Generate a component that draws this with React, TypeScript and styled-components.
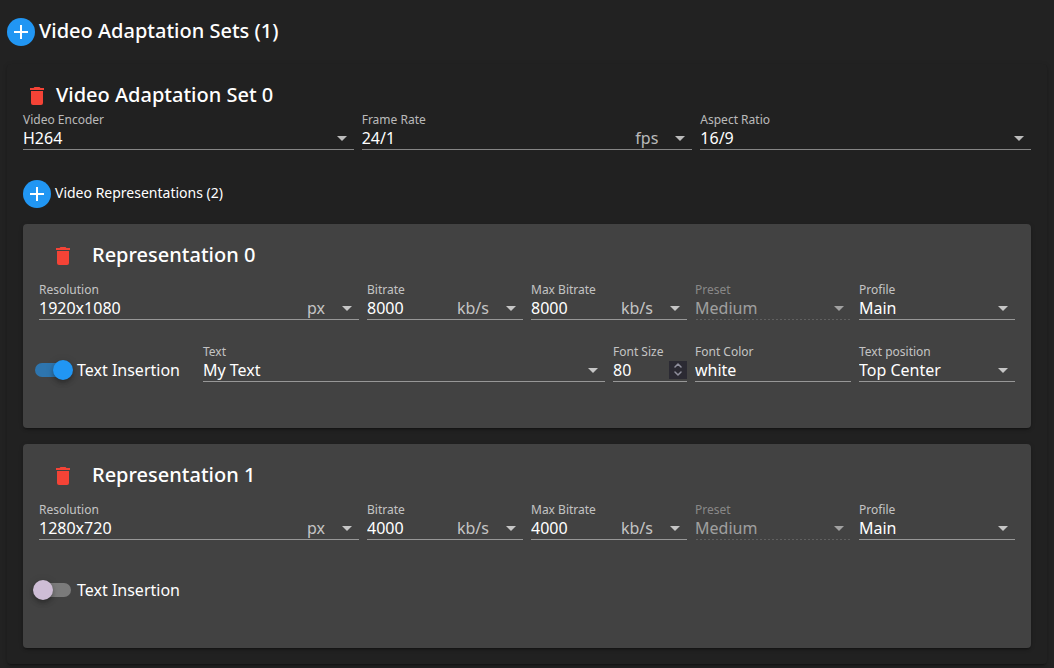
import React, { useId, useState } from "react";
import styled, { createGlobalStyle, css } from "styled-components";

const GlobalStyle = createGlobalStyle`
  *, *::before, *::after { box-sizing: border-box; }
  body {
    margin: 0;
    background: #222222;
    color: #ffffff;
    font-family: "Noto Sans", "Open Sans", sans-serif;
    font-size: 16px;
  }
`;

const Page = styled.main`
  padding: 16px 7px 4px;
`;

const SectionHeader = styled.header`
  display: flex;
  align-items: center;
  gap: 4px;
  height: 32px;
`;

const PageTitle = styled.h1`
  margin: 0;
  font-size: 20px;
  line-height: 30px;
  font-weight: 500;
  padding-bottom: 2px;
`;

const CardTitle = styled(PageTitle).attrs({ as: "h2" })``;

const Subtitle = styled.h3`
  margin: 0;
  font-size: 14px;
  line-height: 20px;
  font-weight: 400;
  padding-bottom: 2px;
`;

const RoundButton = styled.button`
  display: flex;
  align-items: center;
  justify-content: center;
  width: 28px;
  height: 28px;
  padding: 0;
  border: 0;
  border-radius: 50%;
  background: #2196f3;
  color: #ffffff;
  cursor: pointer;
`;

const IconButton = styled.button`
  display: flex;
  width: 24px;
  height: 24px;
  padding: 0;
  border: 0;
  background: none;
  color: #f44336;
  cursor: pointer;
`;

const elevation = css`
  border-radius: 4px;
  box-shadow:
    0 3px 1px -2px rgba(0, 0, 0, 0.2),
    0 2px 2px 0 rgba(0, 0, 0, 0.14),
    0 1px 5px 0 rgba(0, 0, 0, 0.12);
`;

const AdaptationCard = styled.section`
  ${elevation}
  margin-top: 16px;
  padding: 16px;
  background: #212121;
`;

const AdaptationTitleRow = styled.div`
  display: flex;
  align-items: center;
  gap: 7px;
  height: 30px;
  padding: 2px 0 0 2px;
`;

const RepresentationsHeader = styled(SectionHeader)`
  margin: 28px 0 14px;
`;

const RepresentationList = styled.div`
  display: flex;
  flex-direction: column;
  gap: 16px;
`;

const RepresentationCard = styled.article`
  ${elevation}
  padding: 16px 16px 46px;
  background: #424242;
`;

const RepresentationTitleRow = styled.div`
  display: flex;
  align-items: center;
  gap: 17px;
  height: 32px;
  margin-bottom: 8px;
  padding-left: 12px;
`;

const FieldGrid = styled.div`
  display: grid;
  grid-template-columns: repeat(12, minmax(0, 1fr));
  grid-auto-rows: minmax(40px, auto);
  gap: 22px 8px;
`;

const FieldRoot = styled.div<{ $span: number; $disabled?: boolean }>`
  grid-column: span ${(p) => p.$span};
  display: flex;
  flex-direction: column;
  color: ${(p) => (p.$disabled ? "rgba(255, 255, 255, 0.5)" : "#ffffff")};
`;

const FieldLabel = styled.label<{ $disabled?: boolean }>`
  padding-top: 2px;
  font-size: 12px;
  line-height: 16px;
  white-space: nowrap;
  color: ${(p) => (p.$disabled ? "rgba(255, 255, 255, 0.38)" : "rgba(255, 255, 255, 0.7)")};
`;

const Control = styled.div<{ $disabled?: boolean }>`
  display: flex;
  align-items: center;
  height: 22px;
  padding-bottom: 1px;
  background: ${(p) =>
      p.$disabled
        ? "repeating-linear-gradient(to right, transparent 0 1px, rgba(255, 255, 255, 0.16) 1px 3px, transparent 3px 4px)"
        : "linear-gradient(rgba(255, 255, 255, 0.45), rgba(255, 255, 255, 0.45))"}
    left bottom / 100% 1px no-repeat;
`;

const controlText = css`
  flex: 1;
  min-width: 0;
  width: 100%;
  height: 21px;
  margin: 0;
  padding: 0;
  border: 0;
  outline: 0;
  background: none;
  appearance: none;
  color: inherit;
  opacity: 1;
  font: inherit;
  line-height: 21px;
`;

const Select = styled.select`
  ${controlText}
  option { color: #ffffff; background: #424242; }
`;

const TextInput = styled.input`
  ${controlText}
  &[type="number"] { appearance: textfield; }
  &::-webkit-inner-spin-button,
  &::-webkit-outer-spin-button { appearance: none; margin: 0; }
`;

const Suffix = styled.span`
  padding-right: 10px;
  line-height: 21px;
  color: rgba(255, 255, 255, 0.7);
`;

const Arrow = styled.svg<{ $disabled?: boolean }>`
  flex: none;
  width: 24px;
  height: 20px;
  fill: ${(p) => (p.$disabled ? "rgba(255, 255, 255, 0.5)" : "rgba(255, 255, 255, 0.7)")};
  pointer-events: none;
`;

const Stepper = styled.div`
  display: flex;
  flex-direction: column;
  flex: none;
  width: 18px;
  height: 18px;
  margin-bottom: 2px;
  background: #2b2a33;
`;

const StepButton = styled.button`
  display: flex;
  align-items: center;
  justify-content: center;
  height: 9px;
  padding: 0;
  border: 0;
  background: none;
  color: #8f8f9d;
`;

const SwitchLabel = styled.label`
  grid-column: span 2;
  align-self: end;
  display: flex;
  align-items: center;
  gap: 6px;
  height: 24px;
  margin-left: -4px;
  white-space: nowrap;
`;

const SwitchInput = styled.input`
  position: relative;
  flex: none;
  width: 36px;
  height: 14px;
  margin: 0;
  border-radius: 7px;
  appearance: none;
  background: #7b7b7b;

  &::before {
    content: "";
    position: absolute;
    top: -3px;
    left: -2px;
    width: 20px;
    height: 20px;
    border-radius: 50%;
    background: #cebdd6;
    box-shadow:
      0 2px 4px -1px rgba(0, 0, 0, 0.2),
      0 4px 5px 0 rgba(0, 0, 0, 0.14),
      0 1px 10px 0 rgba(0, 0, 0, 0.12);
  }
  &:checked { background: #2e75ae; }
  &:checked::before { left: 18px; background: #2196f3; }
`;

const PlusIcon = () => (
  <svg width="24" height="24" viewBox="0 0 24 24" fill="currentColor" aria-hidden="true">
    <path d="M19,13H13V19H11V13H5V11H11V5H13V11H19V13Z" />
  </svg>
);

const TrashIcon = () => (
  <svg width="24" height="24" viewBox="0 0 24 24" fill="currentColor" aria-hidden="true">
    <path d="M19,4H15.5L14.5,3H9.5L8.5,4H5V6H19M6,19A2,2 0 0,0 8,21H16A2,2 0 0,0 18,19V7H6V19Z" />
  </svg>
);

const Chevron = ({ d }: { d: string }) => (
  <svg width="10" height="6" viewBox="0 0 10 6" fill="none" stroke="currentColor" strokeWidth="1.5" strokeLinecap="round" strokeLinejoin="round" aria-hidden="true">
    <path d={d} />
  </svg>
);

interface FieldProps {
  label: string;
  value: string;
  span: number;
  suffix?: string;
  disabled?: boolean;
}

function SelectField({ label, value, span, suffix, disabled }: FieldProps) {
  const id = useId();
  return (
    <FieldRoot $span={span} $disabled={disabled}>
      <FieldLabel htmlFor={id} $disabled={disabled}>{label}</FieldLabel>
      <Control $disabled={disabled}>
        <Select id={id} defaultValue={value} disabled={disabled}>
          <option>{value}</option>
        </Select>
        {suffix && <Suffix>{suffix}</Suffix>}
        <Arrow $disabled={disabled} viewBox="0 3 24 20" aria-hidden="true">
          <path d="M7,10L12,15L17,10H7Z" />
        </Arrow>
      </Control>
    </FieldRoot>
  );
}

function TextField({ label, value, span }: FieldProps) {
  const id = useId();
  return (
    <FieldRoot $span={span}>
      <FieldLabel htmlFor={id}>{label}</FieldLabel>
      <Control>
        <TextInput id={id} type="text" defaultValue={value} />
      </Control>
    </FieldRoot>
  );
}

function NumberField({ label, value, span }: FieldProps) {
  const id = useId();
  const [amount, setAmount] = useState(Number(value));
  return (
    <FieldRoot $span={span}>
      <FieldLabel htmlFor={id}>{label}</FieldLabel>
      <Control>
        <TextInput id={id} type="number" value={amount} onChange={(e) => setAmount(Number(e.target.value))} />
        <Stepper>
          <StepButton type="button" aria-label="Increase" onClick={() => setAmount(amount + 1)}>
            <Chevron d="M2 5L5 2L8 5" />
          </StepButton>
          <StepButton type="button" aria-label="Decrease" onClick={() => setAmount(amount - 1)}>
            <Chevron d="M2 1L5 4L8 1" />
          </StepButton>
        </Stepper>
      </Control>
    </FieldRoot>
  );
}

interface RepresentationProps {
  index: number;
  resolution: string;
  bitrate: string;
  textInsertion: boolean;
}

function Representation({ index, resolution, bitrate, textInsertion }: RepresentationProps) {
  const [inserted, setInserted] = useState(textInsertion);
  return (
    <RepresentationCard>
      <RepresentationTitleRow>
        <IconButton type="button" aria-label={`Delete representation ${index}`}>
          <TrashIcon />
        </IconButton>
        <CardTitle>Representation {index}</CardTitle>
      </RepresentationTitleRow>
      <FieldGrid>
        <SelectField label="Resolution" value={resolution} suffix="px" span={4} />
        <SelectField label="Bitrate" value={bitrate} suffix="kb/s" span={2} />
        <SelectField label="Max Bitrate" value={bitrate} suffix="kb/s" span={2} />
        <SelectField label="Preset" value="Medium" span={2} disabled />
        <SelectField label="Profile" value="Main" span={2} />
        <SwitchLabel>
          <SwitchInput type="checkbox" role="switch" checked={inserted} onChange={(e) => setInserted(e.target.checked)} />
          Text Insertion
        </SwitchLabel>
        {inserted && (
          <>
            <SelectField label="Text" value="My Text" span={5} />
            <NumberField label="Font Size" value="80" span={1} />
            <TextField label="Font Color" value="white" span={2} />
            <SelectField label="Text position" value="Top Center" span={2} />
          </>
        )}
      </FieldGrid>
    </RepresentationCard>
  );
}

const representations: RepresentationProps[] = [
  { index: 0, resolution: "1920x1080", bitrate: "8000", textInsertion: true },
  { index: 1, resolution: "1280x720", bitrate: "4000", textInsertion: false },
];

export default function App() {
  return (
    <>
      <GlobalStyle />
      <Page>
        <SectionHeader>
          <RoundButton type="button" aria-label="Add video adaptation set"><PlusIcon /></RoundButton>
          <PageTitle>Video Adaptation Sets (1)</PageTitle>
        </SectionHeader>
        <AdaptationCard>
          <AdaptationTitleRow>
            <IconButton type="button" aria-label="Delete video adaptation set 0"><TrashIcon /></IconButton>
            <CardTitle>Video Adaptation Set 0</CardTitle>
          </AdaptationTitleRow>
          <FieldGrid>
            <SelectField label="Video Encoder" value="H264" span={4} />
            <SelectField label="Frame Rate" value="24/1" suffix="fps" span={4} />
            <SelectField label="Aspect Ratio" value="16/9" span={4} />
          </FieldGrid>
          <RepresentationsHeader>
            <RoundButton type="button" aria-label="Add video representation"><PlusIcon /></RoundButton>
            <Subtitle>Video Representations ({representations.length})</Subtitle>
          </RepresentationsHeader>
          <RepresentationList>
            {representations.map((item) => (
              <Representation key={item.index} {...item} />
            ))}
          </RepresentationList>
        </AdaptationCard>
      </Page>
    </>
  );
}
